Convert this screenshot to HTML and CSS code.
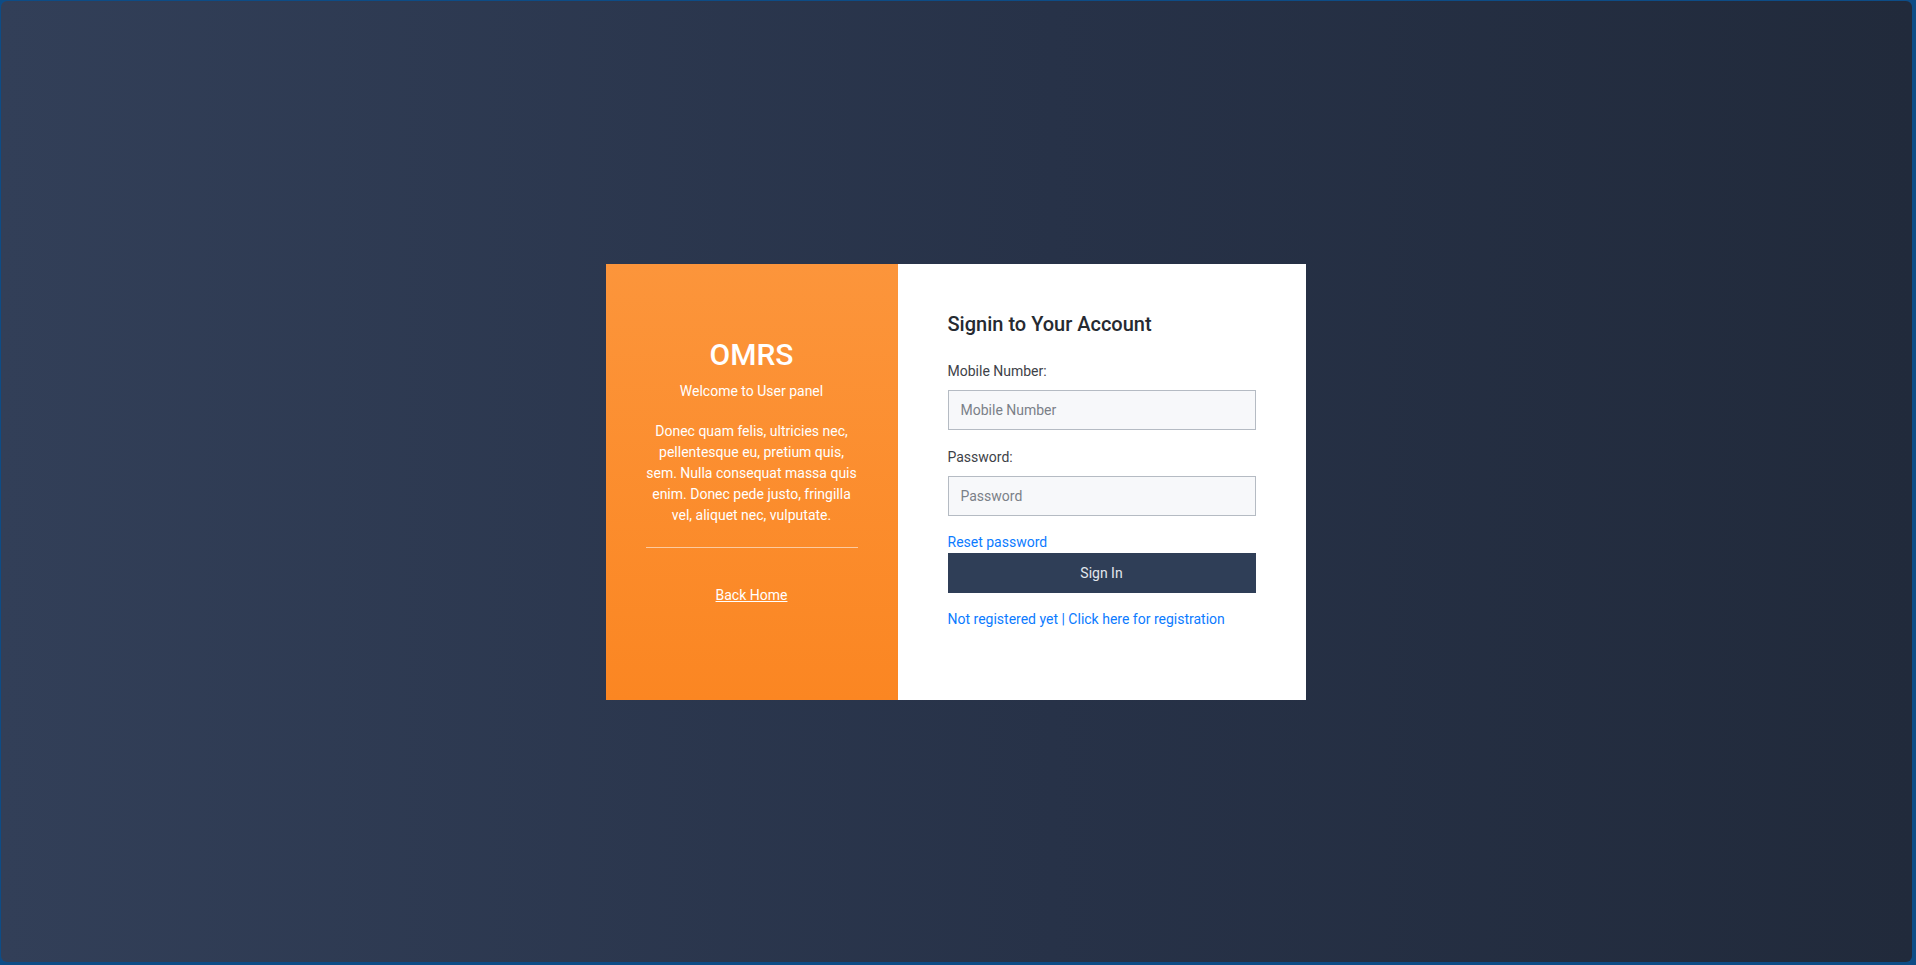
FILE: index.html
```html
<!DOCTYPE html>
<html lang="en">
<head>
<meta charset="utf-8">
<title>OMRS - User Login</title>
<link rel="stylesheet" href="styles.css">
</head>
<body>
<div class="screen">
  <div class="card">
    <div class="brand">
      <h1 class="brand-title">OMRS</h1>
      <p class="brand-sub">Welcome to User panel</p>
      <p class="brand-text">Donec quam felis, ultricies nec, pellentesque eu, pretium quis, sem. Nulla consequat massa quis enim. Donec pede justo, fringilla vel, aliquet nec, vulputate.</p>
      <hr class="brand-rule">
      <a class="brand-link" href="#">Back Home</a>
    </div>
    <div class="form-side">
      <h2 class="form-title">Signin to Your Account</h2>
      <form class="form">
        <label class="label" for="mobile">Mobile Number:</label>
        <input class="input" id="mobile" type="text" placeholder="Mobile Number">
        <label class="label label-gap" for="password">Password:</label>
        <input class="input" id="password" type="password" placeholder="Password">
        <a class="link reset" href="#">Reset password</a>
        <button class="btn" type="button">Sign In</button>
        <a class="link register" href="#">Not registered yet | Click here for registration</a>
      </form>
    </div>
  </div>
</div>
</body>
</html>
```
FILE: styles.css
```css
* { box-sizing: border-box; }
html, body { height: 100%; }
html { background: #0d4c86; }
body {
  margin: 0;
  padding: 1px 4px 3px 1px;
  font-family: Roboto, "Liberation Sans", Arial, sans-serif;
  font-size: 14px;
}
.screen {
  height: 100%;
  border-radius: 6px;
  background: linear-gradient(to right, #323f58 0%, #273248 55%, #212a3b 100%);
  display: flex;
  align-items: center;
  justify-content: center;
  padding-right: 2px;
}
.card {
  display: flex;
  width: 700px;
  height: 436px;
  margin-top: 1px;
}
.brand {
  width: 292px;
  background: linear-gradient(to bottom, #fc953b, #fb8622);
  color: #fff;
  padding: 73px 40px 0;
  text-align: center;
}
.brand-title {
  margin: 0;
  font-size: 30px;
  font-weight: 500;
  line-height: 36px;
}
.brand-sub {
  margin: 9px 0 0;
  font-size: 14px;
  line-height: 18px;
}
.brand-text {
  margin: 21px 0 0;
  font-size: 14px;
  line-height: 21px;
}
.brand-rule {
  margin: 21px 0 0;
  border: 0;
  border-top: 1px solid rgba(255,255,255,0.55);
  height: 0;
}
.brand-link {
  display: inline-block;
  margin-top: 38px;
  color: #fff;
  text-decoration: underline;
  font-size: 14px;
  line-height: 18px;
}
.form-side {
  flex: 1;
  background: #fff;
  padding: 48px 50px 0;
}
.form-title {
  margin: 0;
  font-size: 20px;
  font-weight: 500;
  color: #262a31;
  line-height: 24px;
}
.form {
  display: flex;
  flex-direction: column;
  align-items: flex-start;
  margin-top: 26px;
}
.label {
  color: #3e4248;
  font-size: 14px;
  line-height: 18px;
}
.label-gap { margin-top: 18px; }
.input {
  margin-top: 10px;
  width: 100%;
  height: 40px;
  border: 1px solid #b5bbc3;
  background: #f7f8fa;
  padding: 0 12px;
  font-family: inherit;
  font-size: 14px;
  color: #333;
  border-radius: 0;
  outline: none;
}
.input::placeholder { color: #7b8088; }
.link {
  color: #0c7bff;
  text-decoration: none;
  font-size: 14px;
  line-height: 18px;
}
.reset { margin-top: 17px; }
.btn {
  width: 100%;
  height: 40px;
  margin-top: 2px;
  border: 0;
  background: #2f3e57;
  color: #e3e7ed;
  font-family: inherit;
  font-size: 14px;
}
.register { margin-top: 17px; }
```
